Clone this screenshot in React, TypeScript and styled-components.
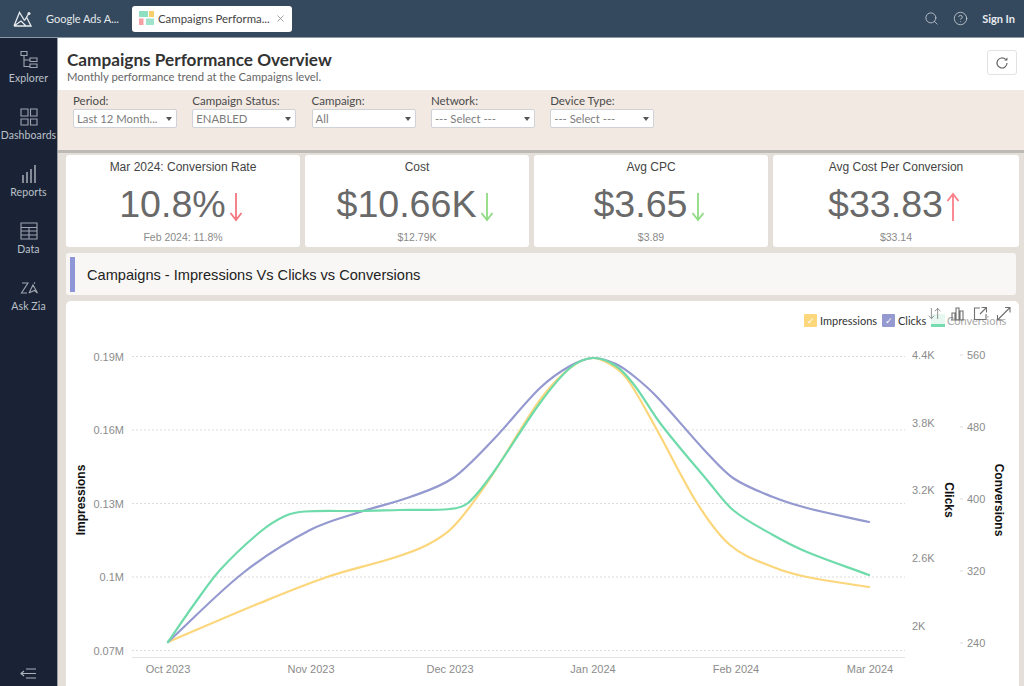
import React from "react";
import styled, { createGlobalStyle } from "styled-components";
import { Search, CircleHelp, X, ArrowDownUp } from "lucide-react";

const Global = createGlobalStyle`
  html, body { margin: 0; padding: 0; height: 686px; overflow: hidden; background: #e5dfd9; }
  #root { height: 686px; }
  * { box-sizing: border-box; }
`;

const lato = `Lato, "Open Sans", sans-serif`;
const arial = `"Liberation Sans", Arial, sans-serif`;

const Shell = styled.div`
  width: 1024px;
  height: 686px;
  display: flex;
  flex-direction: column;
  font-family: ${lato};
  overflow: hidden;
`;
const TopBar = styled.header`
  height: 38px;
  flex: none;
  background: #34495e;
  display: flex;
  align-items: center;
  padding-left: 13px;
  border-bottom: 1px solid #8d99a6;
`;
const Logo = styled.svg`
  width: 19px;
  height: 16px;
  flex: none;
`;
const AppTab = styled.span`
  margin-left: 14px;
  width: 86px;
  font-size: 11px;
  color: #e6e9ec;
  white-space: nowrap;
`;
const ActiveTab = styled.div`
  width: 160px;
  height: 26px;
  background: #fff;
  border-radius: 3px;
  display: flex;
  align-items: center;
  padding-left: 7px;
  font-size: 11.4px;
  color: #444;
  white-space: nowrap;
`;
const TabIcon = styled.svg`
  width: 15px;
  height: 15px;
  margin-right: 4px;
  flex: none;
`;
const TabClose = styled(X)`
  margin-left: 5px;
  color: #777;
`;
const Spacer = styled.div`
  flex: 1;
`;
const TopIcons = styled.div`
  display: flex;
  align-items: center;
  gap: 14px;
  padding-right: 9px;
  color: #d5dadf;
`;
const SignIn = styled.span`
  font-size: 11px;
  font-weight: 700;
  color: #e8ebee;
`;
const Body = styled.div`
  flex: 1;
  display: flex;
  min-height: 0;
`;
const Sidebar = styled.nav`
  width: 58px;
  flex: none;
  background: #1a2336;
  display: flex;
  flex-direction: column;
  align-items: center;
  padding-top: 12px;
  position: relative;
  border-right: 1px solid #9a9ea5;
`;
const NavItem = styled.div`
  height: 57px;
  width: 58px;
  display: flex;
  flex-direction: column;
  align-items: center;
  font-size: 10.5px;
  color: #bcc1c9;
  white-space: nowrap;
  letter-spacing: 0.1px;
`;
const NavIcon = styled.svg`
  width: 20px;
  height: 20px;
  margin-bottom: 2px;
  fill: none;
  stroke: #9ea4ae;
  stroke-width: 1.1;
`;
const Collapse = styled.svg`
  position: absolute;
  bottom: 6px;
  left: 20px;
  width: 17px;
  height: 13px;
  fill: none;
  stroke: #aab0b9;
  stroke-width: 1.2;
`;
const Main = styled.main`
  flex: 1;
  min-width: 0;
  display: flex;
  flex-direction: column;
`;
const PageHead = styled.div`
  height: 52px;
  flex: none;
  background: #fff;
  padding: 12px 7px 0 9px;
  display: flex;
  justify-content: space-between;
  align-items: flex-start;
`;
const Title = styled.h1`
  margin: 0;
  font-size: 17.2px;
  line-height: 20px;
  font-weight: 700;
  color: #333;
`;
const Subtitle = styled.p`
  margin: 0;
  font-size: 11.3px;
  line-height: 13px;
  color: #666;
`;
const RefreshBtn = styled.button`
  width: 30px;
  height: 25px;
  padding: 0;
  background: #fff;
  border: 1px solid #e2e2e2;
  border-radius: 3px;
  display: flex;
  align-items: center;
  justify-content: center;
`;
const Filters = styled.div`
  height: 60px;
  flex: none;
  background: #f2e9e3;
  display: flex;
  gap: 15.3px;
  padding: 4px 0 0 15px;
`;
const Filter = styled.div`
  width: 104px;
`;
const FilterLabel = styled.div`
  font-size: 11.5px;
  line-height: 14px;
  height: 15px;
  color: #4a4a4a;
  white-space: nowrap;
`;
const Select = styled.div`
  height: 19px;
  background: #fff;
  border: 1px solid #cfd2d6;
  border-radius: 2px;
  padding-left: 3px;
  display: flex;
  align-items: center;
  justify-content: space-between;
  font-size: 11.3px;
  color: #7c7c7c;
  white-space: nowrap;
  &::after {
    content: "";
    margin-right: 4px;
    border-left: 3.5px solid transparent;
    border-right: 3.5px solid transparent;
    border-top: 4px solid #555;
  }
`;
const Canvas = styled.div`
  flex: 1;
  min-height: 0;
  display: flex;
  flex-direction: column;
  background: #e5dfd9;
  border-top: 3px solid #bdb9b4;
  padding: 2px 5px 0 8px;
`;
const KpiRow = styled.div`
  display: grid;
  grid-template-columns: 234px 224px 234px 246px;
  gap: 5px;
  height: 92px;
  flex: none;
`;
const KpiCard = styled.div`
  background: #fff;
  border-radius: 3px;
  display: flex;
  flex-direction: column;
  align-items: center;
  font-family: ${arial};
  padding-top: 5px;
`;
const KpiTitle = styled.div`
  font-size: 12px;
  line-height: 14px;
  color: #444;
`;
const KpiValue = styled.div`
  display: flex;
  align-items: center;
  font-size: 37.6px;
  line-height: 44px;
  color: #696969;
  margin-top: 8px;
  height: 44px;
`;
const Arrow = styled.svg`
  width: 14px;
  height: 30px;
  margin-left: 3px;
  margin-right: 4px;
  margin-top: 6px;
  fill: none;
  stroke-width: 1.8;
`;
const KpiSub = styled.div`
  font-size: 10.5px;
  line-height: 12px;
  margin-top: 5px;
  color: #8a8a8a;
`;
const Banner = styled.div`
  height: 42px;
  width: 950px;
  flex: none;
  margin-top: 6px;
  background: #f9f7f5;
  border-radius: 3px;
  padding: 1px 0 0 4px;
  display: flex;
  align-items: center;
  font-family: ${arial};
  font-size: 14.6px;
  color: #222;
`;
const BannerBar = styled.div`
  width: 5px;
  height: 35px;
  background: #8f96d8;
  margin-right: 12px;
`;
const ChartPanel = styled.section`
  flex: 1;
  min-height: 0;
  margin-top: 6px;
  background: #fff;
  border-radius: 5px 5px 0 0;
  position: relative;
`;
const ChartSvg = styled.svg`
  display: block;
  width: 100%;
  height: 100%;
`;
const AxisText = styled.text`
  font-family: ${arial};
  font-size: 11px;
  fill: #8c8c8c;
`;
const AxisTitle = styled.text`
  font-family: ${arial};
  font-size: 12px;
  font-weight: 700;
  fill: #111;
`;
const Legend = styled.div`
  position: absolute;
  top: 13px;
  left: 738px;
  display: flex;
  align-items: center;
  height: 13px;
  font-family: ${lato};
  font-size: 11px;
  color: #333;
  white-space: nowrap;
`;
const Swatch = styled.span<{ $c: string }>`
  width: 13px;
  height: 13px;
  border-radius: 1px;
  background: ${(p) => p.$c};
  color: #fff;
  font-size: 9px;
  line-height: 13px;
  text-align: center;
  margin-right: 3px;
`;
const LegendLabel = styled.span<{ $w: number; $muted?: boolean }>`
  width: ${(p) => p.$w}px;
  color: ${(p) => (p.$muted ? "#aaa" : "#333")};
`;
const GreenSwatch = styled.span`
  width: 14px;
  height: 13px;
  margin-right: 2px;
  background: linear-gradient(#e6f8f0 0 10px, #74dcae 10px);
`;
const Tools = styled.div`
  position: absolute;
  top: 5px;
  left: 861px;
  display: flex;
  gap: 8px;
  color: #707070;
`;
const ToolIcon = styled.svg`
  width: 15px;
  height: 15px;
  fill: none;
  stroke: currentColor;
  stroke-width: 1.1;
`;

type Pt = [number, number];
// Hermite interpolation over x with slopes from non-uniform differences, so uneven point spacing leaves no kinks.
const smooth = (pts: Pt[]) => {
  const n = pts.length;
  const slope = (i: number) => {
    const a = pts[Math.max(i - 1, 0)];
    const b = pts[Math.min(i + 1, n - 1)];
    return (b[1] - a[1]) / (b[0] - a[0]);
  };
  let d = `M${pts[0][0]} ${pts[0][1]}`;
  for (let i = 0; i < n - 1; i++) {
    const [x1, y1] = pts[i];
    const [x2, y2] = pts[i + 1];
    const h = (x2 - x1) / 3;
    d += ` C${(x1 + h).toFixed(1)} ${(y1 + slope(i) * h).toFixed(1)} ${(x2 - h).toFixed(1)} ${(y2 - slope(i + 1) * h).toFixed(1)} ${x2} ${y2}`;
  }
  return d;
};

const series: { color: string; pts: Pt[] }[] = [
  {
    color: "#fbd67a",
    pts: [[168, 642], [260, 603], [327, 577], [393, 558], [427, 545], [453, 527], [487, 483], [540, 400], [570, 368], [593, 358], [616, 368], [630, 383], [657, 430], [697, 503], [730, 545], [773, 567], [807, 577], [869, 587]],
  },
  {
    color: "#9499cf",
    pts: [[168, 642], [243, 573], [310, 530], [360, 512], [410, 497], [453, 478], [493, 440], [540, 388], [570, 366], [593, 358], [616, 364], [635, 377], [657, 397], [707, 453], [733, 478], [773, 497], [807, 508], [869, 522]],
  },
  {
    color: "#6fdbab",
    pts: [[168, 642], [195, 603], [220, 570], [260, 532], [285, 516], [305, 511.5], [360, 511], [400, 510], [450, 509], [468, 503], [493, 473], [540, 403], [570, 368], [593, 358], [616, 366], [635, 386], [660, 423], [707, 480], [733, 510], [773, 535], [807, 552], [869, 575]],
  },
];

const gridY = [356.5, 430, 503.5, 577, 650.5];
const leftLabels = ["0.19M", "0.16M", "0.13M", "0.1M", "0.07M"];
const clicks: [string, number][] = [["4.4K", 355], ["3.8K", 423], ["3.2K", 490], ["2.6K", 558], ["2K", 626]];
const conv: [string, number][] = [["560", 355], ["480", 427], ["400", 499], ["320", 571], ["240", 643]];
const months: [string, number][] = [["Oct 2023", 168], ["Nov 2023", 311], ["Dec 2023", 450], ["Jan 2024", 593], ["Feb 2024", 736], ["Mar 2024", 870]];

const filters = [
  ["Period:", "Last 12 Month..."],
  ["Campaign Status:", "ENABLED"],
  ["Campaign:", "All"],
  ["Network:", "--- Select ---"],
  ["Device Type:", "--- Select ---"],
];

const kpis = [
  { t: "Mar 2024: Conversion Rate", v: "10.8%", s: "Feb 2024: 11.8%", up: false, c: "#f2777f" },
  { t: "Cost", v: "$10.66K", s: "$12.79K", up: false, c: "#8fdc83" },
  { t: "Avg CPC", v: "$3.65", s: "$3.89", up: false, c: "#8fdc83" },
  { t: "Avg Cost Per Conversion", v: "$33.83", s: "$33.14", up: true, c: "#fb7f88" },
];

const nav: [string, React.ReactNode][] = [
  ["Explorer", <path key="e" d="M2 1.5h6v4H2zM11 8h7v3.5h-7zM11 14h7v3.5h-7zM5 5.5v11h6M5 10h6" />],
  ["Dashboards", <path key="d" d="M2 2h7v7H2zM11.5 2H18v7h-6.5zM2 12h7v6H2zM11.5 12H18v6h-6.5z" />],
  ["Reports", <path key="r" d="M4 11v8M8 8v11M12 5v14M16 1v18" strokeWidth={1.6} />],
  ["Data", <path key="t" d="M2 2h16v16H2zM2 6.5h16M2 10h16M2 14h16M10 6.5V18" />],
  ["Ask Zia", <path key="z" d="M3 5h6L2.5 15H8M10 15l4-8 4.5 8-3-2.5-2.5 1-3 1.5M15 5.5l1-1" />],
];

export default function App() {
  return (
    <Shell>
      <Global />
      <TopBar>
        <Logo viewBox="0 0 19 16" fill="none" stroke="#e8ebee" strokeWidth="1.3">
          <path d="M1 15 6.5 1.5l5 8M1 15h17L13.5 6M1 15l7-5 5 5M11.5 9.5 15.5 3" />
          <circle cx="16" cy="2.5" r="1.5" fill="#e8ebee" stroke="none" />
        </Logo>
        <AppTab>Google Ads A...</AppTab>
        <ActiveTab>
          <TabIcon viewBox="0 0 15 15">
            <rect x="0" y="0" width="9" height="6" fill="#8fe0c0" />
            <rect x="10" y="0" width="5" height="6" fill="#f8cf6c" />
            <rect x="0" y="7.5" width="4.5" height="6.5" fill="#f5a0a5" />
            <rect x="7" y="7.5" width="8" height="6.5" fill="#9fe3cd" />
          </TabIcon>
          Campaigns Performa...
          <TabClose size={11} strokeWidth={1.5} />
        </ActiveTab>
        <Spacer />
        <TopIcons>
          <Search size={15} strokeWidth={1.2} />
          <CircleHelp size={15} strokeWidth={1.2} />
          <SignIn>Sign In</SignIn>
        </TopIcons>
      </TopBar>
      <Body>
        <Sidebar>
          {nav.map(([label, icon]) => (
            <NavItem key={label}>
              <NavIcon viewBox="0 0 20 20">{icon}</NavIcon>
              {label}
            </NavItem>
          ))}
          <Collapse viewBox="0 0 17 13">
            <path d="M6 2h10M1 6.5h15M6 11h10M4 4 1 6.5 4 9" />
          </Collapse>
        </Sidebar>
        <Main>
          <PageHead>
            <div>
              <Title>Campaigns Performance Overview</Title>
              <Subtitle>Monthly performance trend at the Campaigns level.</Subtitle>
            </div>
            <RefreshBtn aria-label="Refresh">
              <svg width="14" height="14" viewBox="0 0 14 14" fill="none" stroke="#666" strokeWidth="1.2">
                <path d="M12 7a5 5 0 1 1-1.6-3.7" />
                <path d="M12.4 1.6v3h-3z" fill="#555" stroke="none" />
              </svg>
            </RefreshBtn>
          </PageHead>
          <Filters>
            {filters.map(([label, value]) => (
              <Filter key={label}>
                <FilterLabel>{label}</FilterLabel>
                <Select>{value}</Select>
              </Filter>
            ))}
          </Filters>
          <Canvas>
            <KpiRow>
              {kpis.map((k) => (
                <KpiCard key={k.t}>
                  <KpiTitle>{k.t}</KpiTitle>
                  <KpiValue>
                    {k.v}
                    <Arrow viewBox="0 0 14 30" stroke={k.c}>
                      {k.up ? <path d="M7 29V2M1.5 9 7 2l5.5 7" /> : <path d="M7 1v27M1.5 21 7 28l5.5-7" />}
                    </Arrow>
                  </KpiValue>
                  <KpiSub>{k.s}</KpiSub>
                </KpiCard>
              ))}
            </KpiRow>
            <Banner>
              <BannerBar />
              Campaigns - Impressions Vs Clicks vs Conversions
            </Banner>
            <ChartPanel>
              <ChartSvg viewBox="66 301 953 385" preserveAspectRatio="xMinYMin meet">
                {gridY.map((y) => (
                  <line key={y} x1="132" x2="905" y1={y} y2={y} stroke="#dcdcdc" strokeDasharray="2 2" />
                ))}
                <line x1="132" x2="905" y1="657.5" y2="657.5" stroke="#e3e3e3" />
                {gridY.map((y, i) => (
                  <AxisText key={y} x="124" y={y + 4} textAnchor="end">{leftLabels[i]}</AxisText>
                ))}
                {clicks.map(([t, y]) => (
                  <AxisText key={t} x="912" y={y + 4}>{t}</AxisText>
                ))}
                {conv.map(([t, y]) => (
                  <g key={t}>
                    <line x1="960" x2="963" y1={y} y2={y} stroke="#ddd" />
                    <AxisText x="967" y={y + 4}>{t}</AxisText>
                  </g>
                ))}
                {months.map(([t, x]) => (
                  <AxisText key={t} x={x} y="673" textAnchor="middle">{t}</AxisText>
                ))}
                <AxisTitle transform="translate(85 500) rotate(-90)" textAnchor="middle">Impressions</AxisTitle>
                <AxisTitle transform="translate(945 500) rotate(90)" textAnchor="middle">Clicks</AxisTitle>
                <AxisTitle transform="translate(995 500) rotate(90)" textAnchor="middle">Conversions</AxisTitle>
                {series.map((s) => (
                  <path key={s.color} d={smooth(s.pts)} fill="none" stroke={s.color} strokeWidth="2.2" strokeLinecap="round" />
                ))}
              </ChartSvg>
              <Legend>
                <Swatch $c="#fdd77c">✓</Swatch>
                <LegendLabel $w={62}>Impressions</LegendLabel>
                <Swatch $c="#9499cf">✓</Swatch>
                <LegendLabel $w={33}>Clicks</LegendLabel>
                <GreenSwatch />
                <LegendLabel $w={60} $muted>Conversions</LegendLabel>
              </Legend>
              <Tools>
                <ArrowDownUp size={15} strokeWidth={1.2} />
                <ToolIcon viewBox="0 0 15 15">
                  <path d="M2 14V7h3v7M6 14V2h3v12M10 14V5h3v9M1 14h13" />
                </ToolIcon>
                <ToolIcon viewBox="0 0 15 15">
                  <path d="M7 2H1.5v11.5H13V8M8.5 1.5h5v5M13.5 1.5 7 8" />
                </ToolIcon>
                <ToolIcon viewBox="0 0 15 15">
                  <path d="M9 1.5h5v5M14 1.5 1.5 14M1.5 9v5h5" />
                </ToolIcon>
              </Tools>
            </ChartPanel>
          </Canvas>
        </Main>
      </Body>
    </Shell>
  );
}
